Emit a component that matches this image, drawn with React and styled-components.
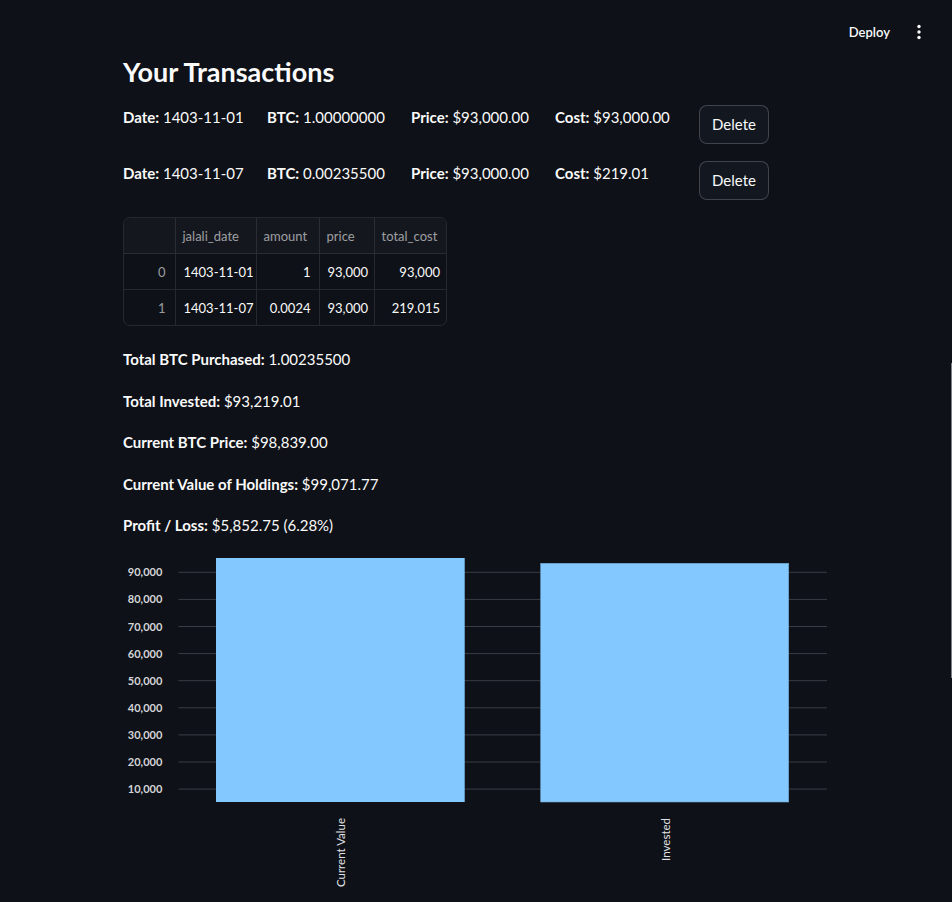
import React from 'react'
import styled, { createGlobalStyle } from 'styled-components'

const transactions = [
  { date: '1403-11-01', btc: '1.00000000', price: '$93,000.00', cost: '$93,000.00' },
  { date: '1403-11-07', btc: '0.00235500', price: '$93,000.00', cost: '$219.01' },
]

const tableRows = [
  { idx: 0, date: '1403-11-01', amount: '1', price: '93,000', total: '93,000' },
  { idx: 1, date: '1403-11-07', amount: '0.0024', price: '93,000', total: '219.015' },
]

const summary = [
  ['Total BTC Purchased:', '1.00235500'],
  ['Total Invested:', '$93,219.01'],
  ['Current BTC Price:', '$98,839.00'],
  ['Current Value of Holdings:', '$99,071.77'],
  ['Profit / Loss:', '$5,852.75 (6.28%)'],
]

const yTicks = [90000, 80000, 70000, 60000, 50000, 40000, 30000, 20000, 10000]

function App() {
  return (
    <>
      <GlobalStyle />
      <Header>
        <DeployLink>Deploy</DeployLink>
        <MenuIcon width="16" height="20" viewBox="0 0 16 20">
          <circle cx="8" cy="4.5" r="1.7" fill="#fafafa" />
          <circle cx="8" cy="10" r="1.7" fill="#fafafa" />
          <circle cx="8" cy="15.5" r="1.7" fill="#fafafa" />
        </MenuIcon>
      </Header>
      <Main>
        <Title>Your Transactions</Title>
        <TxGrid>
          {transactions.map((t) => (
            <React.Fragment key={t.date}>
              <Field><b>Date:</b> {t.date}</Field>
              <Field><b>BTC:</b> {t.btc}</Field>
              <Field><b>Price:</b> {t.price}</Field>
              <Field><b>Cost:</b> {t.cost}</Field>
              <div><DeleteButton>Delete</DeleteButton></div>
            </React.Fragment>
          ))}
        </TxGrid>

        <TableWrap>
          <Table>
            <colgroup>
              <col style={{ width: 51 }} />
              <col style={{ width: 81 }} />
              <col style={{ width: 63 }} />
              <col style={{ width: 55 }} />
              <col style={{ width: 74 }} />
            </colgroup>
            <thead>
              <tr>
                <Th />
                <Th>jalali_date</Th>
                <Th>amount</Th>
                <Th>price</Th>
                <Th>total_cost</Th>
              </tr>
            </thead>
            <tbody>
              {tableRows.map((r) => (
                <tr key={r.idx}>
                  <IndexCell>{r.idx}</IndexCell>
                  <Td>{r.date}</Td>
                  <Td $num>{r.amount}</Td>
                  <Td $num>{r.price}</Td>
                  <Td $num>{r.total}</Td>
                </tr>
              ))}
            </tbody>
          </Table>
        </TableWrap>

        <Summary>
          {summary.map(([label, val]) => (
            <Line key={label}><b>{label}</b> {val}</Line>
          ))}
        </Summary>

        <Chart width="704" height="350" viewBox="0 0 704 350">
          {yTicks.map((v, i) => {
            const y = 27.3 + i * 27.1
            return (
              <g key={v}>
                <line x1="55.3" x2="704" y1={y} y2={y} stroke="#3a3d45" strokeWidth="1" />
                <text x="39.3" y={y + 4} textAnchor="end" fontSize="11" fontWeight="700" fill="#d4d5d8">
                  {v.toLocaleString('en-US')}
                </text>
              </g>
            )
          })}
          <rect x="93" y="13" width="248.7" height="244" fill="#83c9ff" />
          <rect x="417.7" y="18.3" width="248" height="238.7" fill="#83c9ff" stroke="#6fa8d6" strokeWidth="0.6" />
          <text transform="translate(222,273) rotate(-90)" textAnchor="end" fontSize="11.5" fill="#e2e3e6">Current Value</text>
          <text transform="translate(546.5,273) rotate(-90)" textAnchor="end" fontSize="11.5" fill="#e2e3e6">Invested</text>
        </Chart>
      </Main>
      <ScrollThumb />
    </>
  )
}

export default App

const GlobalStyle = createGlobalStyle`
  html, body {
    margin: 0;
    height: 100%;
    overflow: hidden;
    background: #0e1117;
  }
  body {
    color: #fafafa;
    font-family: "Lato", "Noto Sans", sans-serif;
    font-size: 15px;
  }
  b { font-weight: 700; }
`

const Header = styled.header`
  height: 56px;
  display: flex;
  justify-content: flex-end;
  align-items: flex-start;
  padding: 22px 25px 0 0;
  box-sizing: border-box;
  gap: 21px;
`

const DeployLink = styled.span`
  font-size: 13px;
  line-height: 20px;
  font-weight: 600;
  color: #fafafa;
`

const MenuIcon = styled.svg`
  display: block;
`

const Main = styled.main`
  width: 704px;
  margin: 0 0 0 123px;
`

const Title = styled.h3`
  margin: 0 0 17px;
  font-size: 27px;
  line-height: 32px;
  font-weight: 700;
`

const TxGrid = styled.div`
  display: grid;
  grid-template-columns: repeat(5, 128px);
  grid-auto-rows: 40px;
  column-gap: 16px;
  row-gap: 16px;
  align-items: start;
`

const Field = styled.div`
  line-height: 25.6px;
  white-space: nowrap;
`

const DeleteButton = styled.button`
  height: 39px;
  padding: 0 12px;
  border: 1px solid rgba(250, 250, 250, 0.2);
  border-radius: 8px;
  background: #131720;
  color: #fafafa;
  font: inherit;
  line-height: 1;
`

const TableWrap = styled.div`
  margin-top: 16px;
  width: 324px;
  border: 1px solid rgba(250, 250, 250, 0.1);
  border-radius: 7px;
  overflow: hidden;
  box-sizing: border-box;
`

const Table = styled.table`
  width: 100%;
  border-collapse: collapse;
  table-layout: fixed;
  font-size: 13px;
  white-space: nowrap;
`

const Th = styled.th`
  height: 35px;
  padding: 0 7px;
  text-align: left;
  font-weight: 400;
  color: rgba(250, 250, 250, 0.6);
  background: #14171e;
  border-left: 1px solid rgba(250, 250, 250, 0.1);
  border-bottom: 1px solid rgba(250, 250, 250, 0.1);
  &:first-child { border-left: none; }
`

const Td = styled.td`
  height: 35px;
  padding: 0 8px;
  text-align: ${(p) => (p.$num ? 'right' : 'left')};
  border-left: 1px solid rgba(250, 250, 250, 0.1);
  border-bottom: 1px solid rgba(250, 250, 250, 0.1);
  tr:last-child & { border-bottom: none; }
`

const IndexCell = styled.td`
  height: 35px;
  padding: 0 9px;
  text-align: right;
  color: rgba(250, 250, 250, 0.6);
  border-bottom: 1px solid rgba(250, 250, 250, 0.1);
  tr:last-child & { border-bottom: none; }
`

const Summary = styled.div`
  margin-top: 21px;
  display: flex;
  flex-direction: column;
  gap: 16px;
`

const Line = styled.p`
  margin: 0;
  line-height: 25.6px;
`

const Chart = styled.svg`
  display: block;
  margin-top: 6px;
  font-family: "Lato", "Noto Sans", sans-serif;
`

const ScrollThumb = styled.div`
  position: fixed;
  right: 0;
  top: 363px;
  width: 1px;
  height: 315px;
  background: #7d7f84;
`
